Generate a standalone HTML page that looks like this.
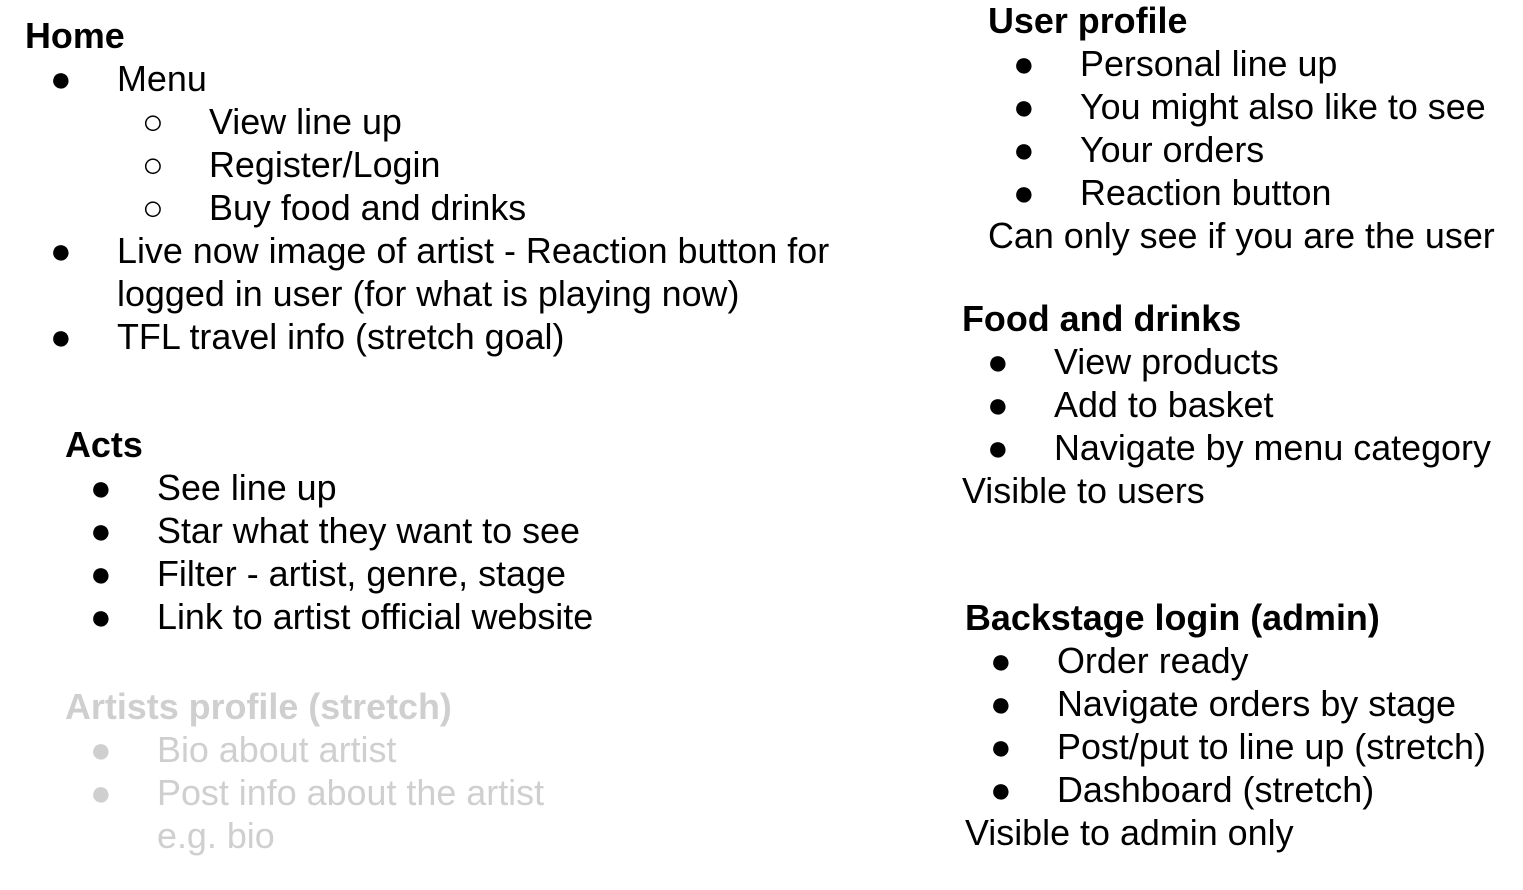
<!DOCTYPE html>
<html><head><meta charset="utf-8"><style>
body{margin:0;width:1523px;height:890px;background:#fff;overflow:hidden;position:relative;font-family:"Liberation Sans",Arial,sans-serif;font-size:35.9px;color:#000}
div{position:absolute;white-space:nowrap;line-height:43px;margin-top:1px}
.b{font-weight:bold}
.g{color:#cfcfcf}
</style></head><body>
<div class="b" style="left:25px;top:14px">Home</div>
<div style="left:50px;top:57px">●</div><div style="left:117px;top:57px">Menu</div>
<div style="left:142px;top:100px">○</div><div style="left:209px;top:100px">View line up</div>
<div style="left:142px;top:143px">○</div><div style="left:209px;top:143px">Register/Login</div>
<div style="left:142px;top:186px">○</div><div style="left:209px;top:186px">Buy food and drinks</div>
<div style="left:50px;top:229px">●</div><div style="left:117px;top:229px">Live now image of artist - Reaction button for</div>
<div style="left:117px;top:272px">logged in user (for what is playing now)</div>
<div style="left:50px;top:315px">●</div><div style="left:117px;top:315px">TFL travel info (stretch goal)</div>

<div class="b" style="left:65px;top:423px">Acts</div>
<div style="left:90px;top:466px">●</div><div style="left:157px;top:466px">See line up</div>
<div style="left:90px;top:509px">●</div><div style="left:157px;top:509px">Star what they want to see</div>
<div style="left:90px;top:552px">●</div><div style="left:157px;top:552px">Filter - artist, genre, stage</div>
<div style="left:90px;top:595px">●</div><div style="left:157px;top:595px">Link to artist official website</div>

<div class="b g" style="left:65px;top:685px">Artists profile (stretch)</div>
<div class="g" style="left:90px;top:728px">●</div><div class="g" style="left:157px;top:728px">Bio about artist</div>
<div class="g" style="left:90px;top:771px">●</div><div class="g" style="left:157px;top:771px">Post info about the artist</div>
<div class="g" style="left:157px;top:814px">e.g. bio</div>

<div class="b" style="left:988px;top:-1px">User profile</div>
<div style="left:1013px;top:42px">●</div><div style="left:1080px;top:42px">Personal line up</div>
<div style="left:1013px;top:85px">●</div><div style="left:1080px;top:85px">You might also like to see</div>
<div style="left:1013px;top:128px">●</div><div style="left:1080px;top:128px">Your orders</div>
<div style="left:1013px;top:171px">●</div><div style="left:1080px;top:171px">Reaction button</div>
<div style="left:988px;top:214px">Can only see if you are the user</div>

<div class="b" style="left:962px;top:297px">Food and drinks</div>
<div style="left:987px;top:340px">●</div><div style="left:1054px;top:340px">View products</div>
<div style="left:987px;top:383px">●</div><div style="left:1054px;top:383px">Add to basket</div>
<div style="left:987px;top:426px">●</div><div style="left:1054px;top:426px">Navigate by menu category</div>
<div style="left:962px;top:469px">Visible to users</div>

<div class="b" style="left:965px;top:596px">Backstage login (admin)</div>
<div style="left:990px;top:639px">●</div><div style="left:1057px;top:639px">Order ready</div>
<div style="left:990px;top:682px">●</div><div style="left:1057px;top:682px">Navigate orders by stage</div>
<div style="left:990px;top:725px">●</div><div style="left:1057px;top:725px">Post/put to line up (stretch)</div>
<div style="left:990px;top:768px">●</div><div style="left:1057px;top:768px">Dashboard (stretch)</div>
<div style="left:965px;top:811px">Visible to admin only</div>
</body></html>
